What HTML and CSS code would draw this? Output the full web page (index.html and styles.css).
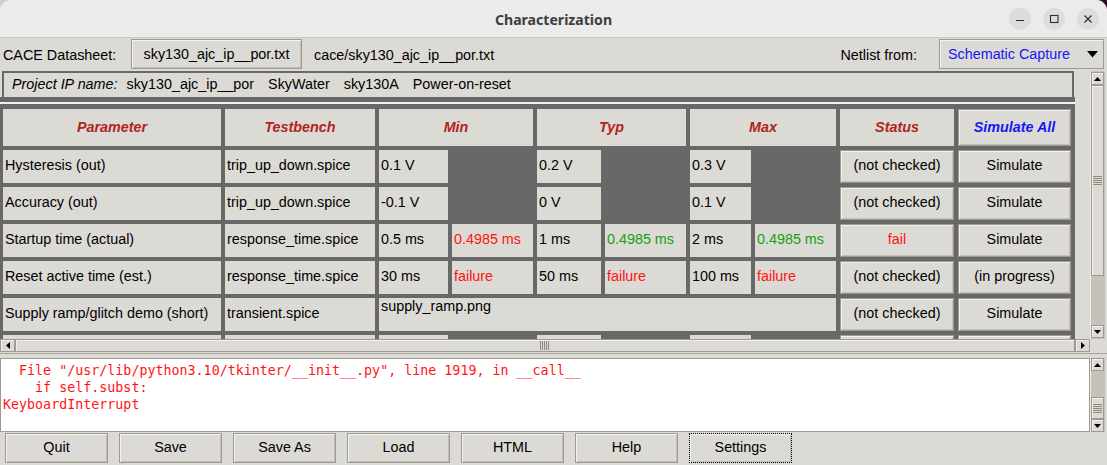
FILE: index.html
```html
<!DOCTYPE html>
<html>
<head>
<meta charset="utf-8">
<title>Characterization</title>
<link rel="stylesheet" href="styles.css">
</head>
<body>
<div class="window">
  <header class="titlebar">
    <div></div>
    <div class="title">Characterization</div>
    <div class="controls">
      <span class="wc"><svg width="22" height="22" viewBox="0 0 22 22"><path d="M7 12.5h8" stroke="#2e2e2e" stroke-width="1.2" fill="none"/></svg></span>
      <span class="wc"><svg width="22" height="22" viewBox="0 0 22 22"><rect x="7.5" y="7.5" width="7.5" height="7" stroke="#2e2e2e" stroke-width="1.1" fill="none"/></svg></span>
      <span class="wc"><svg width="22" height="22" viewBox="0 0 22 22"><path d="M7.5 7.5l7 7M14.5 7.5l-7 7" stroke="#2e2e2e" stroke-width="1.2" fill="none"/></svg></span>
    </div>
  </header>

  <div class="toprow">
    <span class="lbl ds">CACE Datasheet:</span>
    <span class="btn dsbtn">sky130_ajc_ip__por.txt</span>
    <span class="lbl path">cace/sky130_ajc_ip__por.txt</span>
    <span class="lbl netlist">Netlist from:</span>
    <span class="combo"><span class="ctext">Schematic Capture</span><svg class="carrow" width="11" height="7" viewBox="0 0 11 7"><path d="M0 0h11L5.5 6.5z" fill="#000"/></svg></span>
  </div>

  <div class="tablearea">
    <div class="viewport">
      <div class="frame">
        <div class="projrow">
          <span class="pi">Project IP name:</span>
          <span class="pv first">sky130_ajc_ip__por</span>
          <span class="pv">SkyWater</span>
          <span class="pv">sky130A</span>
          <span class="pv">Power-on-reset</span>
        </div>
        <div class="sep"></div>
        <div class="grid">
          <div class="hd">Parameter</div>
          <div class="hd">Testbench</div>
          <div class="hd span2">Min</div>
          <div class="hd span2">Typ</div>
          <div class="hd span2">Max</div>
          <div class="hd">Status</div>
          <div class="rb hdbtn">Simulate All</div>

          <div class="c">Hysteresis (out)</div>
          <div class="c">trip_up_down.spice</div>
          <div class="c">0.1 V</div><div class="e"></div>
          <div class="c">0.2 V</div><div class="e"></div>
          <div class="c">0.3 V</div><div class="e"></div>
          <div class="rb">(not checked)</div>
          <div class="rb">Simulate</div>

          <div class="c">Accuracy (out)</div>
          <div class="c">trip_up_down.spice</div>
          <div class="c">-0.1 V</div><div class="e"></div>
          <div class="c">0 V</div><div class="e"></div>
          <div class="c">0.1 V</div><div class="e"></div>
          <div class="rb">(not checked)</div>
          <div class="rb">Simulate</div>

          <div class="c">Startup time (actual)</div>
          <div class="c">response_time.spice</div>
          <div class="c">0.5 ms</div><div class="c red">0.4985 ms</div>
          <div class="c">1 ms</div><div class="c green">0.4985 ms</div>
          <div class="c">2 ms</div><div class="c green">0.4985 ms</div>
          <div class="rb red">fail</div>
          <div class="rb">Simulate</div>

          <div class="c">Reset active time (est.)</div>
          <div class="c">response_time.spice</div>
          <div class="c">30 ms</div><div class="c red">failure</div>
          <div class="c">50 ms</div><div class="c red">failure</div>
          <div class="c">100 ms</div><div class="c red">failure</div>
          <div class="rb">(not checked)</div>
          <div class="rb">(in progress)</div>

          <div class="c">Supply ramp/glitch demo (short)</div>
          <div class="c">transient.spice</div>
          <div class="c img">supply_ramp.png</div>
          <div class="rb">(not checked)</div>
          <div class="rb">Simulate</div>

          <div class="c"></div>
          <div class="c"></div>
          <div class="c"></div><div class="e"></div>
          <div class="c"></div><div class="e"></div>
          <div class="c"></div><div class="e"></div>
          <div class="rb"></div>
          <div class="rb"></div>
        </div>
      </div>
    </div>

    <div class="vsb main">
      <span class="sbb"><svg width="7" height="4" viewBox="0 0 7 4"><path d="M0 4L3.5 0L7 4z" fill="#000"/></svg></span>
      <span class="thumb v t1"><span class="grip-h"></span></span>
      <span class="trough"></span>
      <span class="sbb"><svg width="7" height="4" viewBox="0 0 7 4"><path d="M0 0h7L3.5 4z" fill="#000"/></svg></span>
    </div>

    <div class="hsb">
      <span class="sbb"><svg width="4" height="7" viewBox="0 0 4 7"><path d="M4 0v7L0 3.5z" fill="#000"/></svg></span>
      <span class="thumb h"><span class="grip-v"></span></span>
      <span class="sbb"><svg width="4" height="7" viewBox="0 0 4 7"><path d="M0 0v7L4 3.5z" fill="#000"/></svg></span>
    </div>
    <div></div>
  </div>

  <div class="sash"></div>

  <div class="console">
    <pre class="log">  File "/usr/lib/python3.10/tkinter/__init__.py", line 1919, in __call__
    if self.subst:
KeyboardInterrupt</pre>
    <div class="vsb small">
      <span class="sbb"><svg width="7" height="4" viewBox="0 0 7 4"><path d="M0 4L3.5 0L7 4z" fill="#000"/></svg></span>
      <span class="trough"></span>
      <span class="thumb v t2"><span class="grip-h"></span></span>
      <span class="sbb"><svg width="7" height="4" viewBox="0 0 7 4"><path d="M0 0h7L3.5 4z" fill="#000"/></svg></span>
    </div>
  </div>

  <div class="buttons">
    <span class="btn bb">Quit</span>
    <span class="btn bb">Save</span>
    <span class="btn bb">Save As</span>
    <span class="btn bb">Load</span>
    <span class="btn bb">HTML</span>
    <span class="btn bb">Help</span>
    <span class="btn bb focus">Settings</span>
  </div>
</div>
</body>
</html>
```

FILE: styles.css
```css
* { box-sizing: border-box; }
html, body { margin: 0; height: 465px; overflow: hidden; }
body {
  background: linear-gradient(to right, #cfcfcf 0 910px, #2c0d24 910px);
  font-family: "Liberation Sans", Arial, sans-serif;
  font-size: 14.35px;
  color: #000;
}
.window {
  width: 1107px;
  height: 465px;
  background: #dcdad5;
  border-radius: 11px 11px 0 0;
  overflow: hidden;
  display: flex;
  flex-direction: column;
}

/* title bar */
.titlebar {
  flex: none;
  height: 38px;
  background: #ebebeb;
  border-bottom: 1px solid #c9c7c3;
  display: grid;
  grid-template-columns: 1fr auto 1fr;
  align-items: center;
}
.title {
  font-family: "Noto Sans", sans-serif;
  font-weight: 700;
  font-size: 14.1px;
  color: #3d3d3d;
  padding-top: 1px;
}
.controls {
  justify-self: end;
  display: flex;
  gap: 12px;
  margin-right: 8px;
  padding-top: 1px;
}
.wc {
  width: 22px;
  height: 22px;
  border-radius: 50%;
  background: #dcdcdc;
  display: flex;
}

/* top row */
.toprow {
  flex: none;
  height: 33px;
  display: flex;
  align-items: center;
}
.lbl { white-space: nowrap; }
.ds { width: 131px; padding-left: 3px; }
.btn {
  height: 30px;
  border: 1px solid #9e9a91;
  background: #dcdad5;
  box-shadow: inset 1px 1px 0 #f4f2ef, inset -1px -1px 0 #c2beb6;
  display: flex;
  align-items: center;
  justify-content: center;
  white-space: nowrap;
}
.dsbtn { width: 171px; margin-top: -1px; }
.path { margin-left: 12px; }
.netlist { margin-left: auto; margin-right: 22px; }
.combo {
  width: 165px;
  height: 30px;
  margin-right: 3px;
  margin-top: -1px;
  border: 1px solid #9e9a91;
  background: #dcdad5;
  box-shadow: inset 1px 1px 0 #f4f2ef;
  display: flex;
  align-items: center;
  padding-left: 8px;
}
.ctext { color: #1717f5; flex: 1; }
.carrow { margin-right: 5px; }

/* table area */
.tablearea {
  flex: none;
  height: 281px;
  display: grid;
  grid-template-columns: 1090px 15px;
  grid-template-rows: 268px 13px;
}
.viewport { overflow: hidden; }
.frame { width: 1075px; }
.projrow {
  margin-left: 2px;
  width: 1072px;
  height: 26px;
  border: 2px solid #686868;
  border-bottom: 0;
  display: flex;
  align-items: center;
  gap: 14px;
  padding: 0 0 3px 8px;
}
.pi { font-style: italic; margin-right: -5px; }
.sep {
  height: 12px;
  background: linear-gradient(#686868 0 5px, #f2f0ec 5px 7px, #686868 7px);
}
.grid {
  display: grid;
  grid-template-columns: 218px 150px 69px 81px 64px 81px 61px 81px 114px 113px;
  grid-template-rows: 37px repeat(6, 33px);
  gap: 4px;
  background: #686868;
  padding: 0 4px 0 3px;
}
.hd {
  background: #dcdad5;
  color: #b22323;
  font-weight: 700;
  font-style: italic;
  display: flex;
  align-items: center;
  justify-content: center;
  padding-bottom: 1px;
}
.span2 { grid-column: span 2; }
.c {
  background: #dcdad5;
  display: flex;
  align-items: center;
  padding: 0 0 3px 2px;
  white-space: nowrap;
  overflow: hidden;
}
.e { background: transparent; }
.img { grid-column: span 6; align-items: flex-start; line-height: 17px; padding-bottom: 0; }
.red { color: #ff1414; }
.green { color: #16a016; }
.rb {
  background: #dcdad5;
  border: 1px solid #9e9a91;
  box-shadow: inset 1px 1px 0 #f4f2ef, inset -1px -1px 0 #c2beb6;
  display: flex;
  align-items: center;
  justify-content: center;
  white-space: nowrap;
  padding-bottom: 3px;
}
.hdbtn { color: #1717f5; font-weight: 700; font-style: italic; padding-bottom: 1px; }

/* scrollbars */
.vsb {
  display: flex;
  flex-direction: column;
  background: #c6c2ba;
  border-left: 1px solid #eeebe7;
  padding: 0 1px 0 0;
}
.vsb.main { padding-top: 1px; padding-bottom: 1px; }
.sbb {
  flex: none;
  height: 13px;
  border: 1px solid #9e9a91;
  background: #dcdad5;
  box-shadow: inset 1px 1px 0 #f4f2ef;
  display: flex;
  align-items: center;
  justify-content: center;
}
.hsb .sbb { width: 15px; height: 13px; }
.thumb {
  border: 1px solid #9e9a91;
  background: #dcdad5;
  box-shadow: inset 1px 1px 0 #f4f2ef;
  display: flex;
  align-items: center;
  justify-content: center;
}
.t1 { flex: 0 0 191px; }
.t2 { flex: 0 0 22px; }
.trough { flex: 1; }
.grip-h {
  width: 9px;
  height: 9px;
  background: repeating-linear-gradient(#8e8a82 0 1px, transparent 1px 2px);
}
.hsb {
  display: flex;
  background: #c6c2ba;
}
.thumb.h { flex: 1; }
.grip-v {
  width: 10px;
  height: 9px;
  background: repeating-linear-gradient(to right, #8e8a82 0 1px, transparent 1px 2px);
}

/* sash */
.sash {
  flex: none;
  height: 6px;
  background: linear-gradient(#dcdad5 0 1px, #a8a49c 1px 2px, #dcdad5 2px);
}

/* console */
.console {
  flex: none;
  height: 74px;
  display: grid;
  grid-template-columns: 1090px 15px;
}
.log {
  margin: 0;
  background: #fff;
  border: 1px solid #9e9a91;
  padding: 3px 2px 0;
  font-family: "DejaVu Sans Mono", monospace;
  font-size: 13.33px;
  line-height: 17px;
  color: #ff1414;
  overflow: hidden;
}

/* bottom buttons */
.buttons {
  flex: none;
  height: 33px;
  display: flex;
  gap: 11px;
  padding: 1px 0 0 5px;
}
.bb { width: 103px; padding-bottom: 2px; }
.focus { border: 1px dotted #000; }
```
